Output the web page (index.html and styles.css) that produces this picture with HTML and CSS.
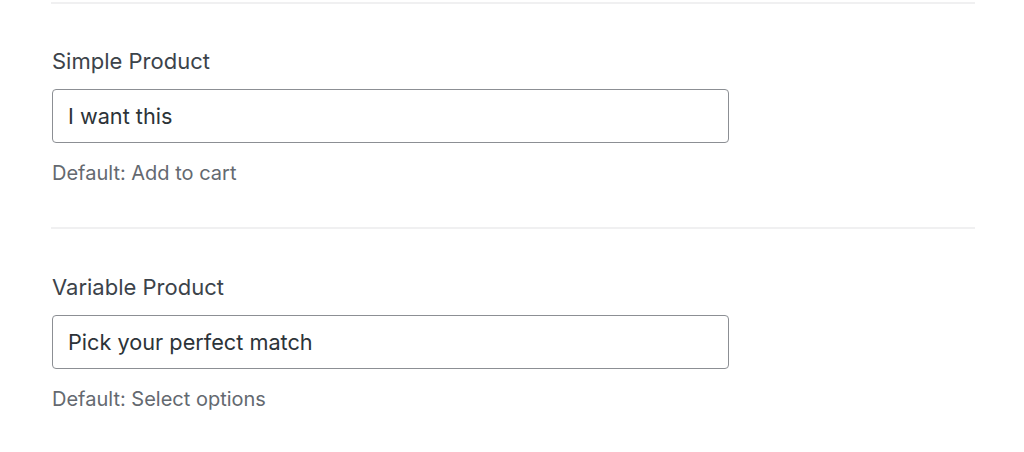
FILE: index.html
```html
<!DOCTYPE html>
<html>
<head>
<meta charset="utf-8">
<link rel="stylesheet" href="styles.css">
</head>
<body>
<div class="settings">
  <div class="field">
    <label class="field-label" for="simple">Simple Product</label>
    <input class="field-input" id="simple" type="text" value="I want this">
    <p class="field-help">Default: Add to cart</p>
  </div>
  <div class="field">
    <label class="field-label" for="variable">Variable Product</label>
    <input class="field-input" id="variable" type="text" value="Pick your perfect match">
    <p class="field-help">Default: Select options</p>
  </div>
</div>
</body>
</html>
```
FILE: styles.css
```css
html, body {
  margin: 0;
  padding: 0;
  background: #ffffff;
}
body {
  font-family: Inter, "Liberation Sans", Arial, sans-serif;
  -webkit-font-smoothing: antialiased;
}
.settings {
  width: 924px;
  margin-left: 51px;
  padding-top: 2px;
}
.field {
  border-top: 2px solid #f0f0f1;
  padding-top: 43px;
  padding-bottom: 41px;
  display: flex;
  flex-direction: column;
  align-items: flex-start;
}
.field + .field {
  padding-top: 44px;
}
.field-label {
  font-size: 22px;
  line-height: 28px;
  color: #3c434a;
  margin-left: 1px;
}
.field-input {
  box-sizing: border-box;
  margin: 14px 0 0 1px;
  width: 677px;
  height: 54px;
  border: 1px solid #8c8f94;
  border-radius: 4px;
  padding: 0 15px;
  font-family: inherit;
  font-size: 21.7px;
  color: #2c3338;
  background: #fff;
  outline: none;
}
.field-help {
  margin: 17px 0 0 1px;
  font-size: 20px;
  line-height: 26px;
  color: #646970;
}
```
